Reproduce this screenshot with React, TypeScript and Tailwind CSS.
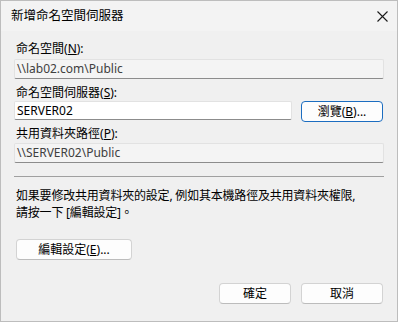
import React from "react";

const font = {
  fontFamily: '"Noto Sans", "Noto Sans CJK TC", sans-serif',
};

const Key = ({ k }: { k: string }) => (
  <>
    (<span className="underline">{k}</span>)
  </>
);

const ReadBox = ({ value }: { value: string }) => (
  <div className="h-[20px] w-full border border-[#e2e2e2] border-b-[#8c8c8c] bg-[#f4f4f4] px-[2px] flex items-center text-[#404040] rounded-[2px]">
    {value}
  </div>
);

const Button = ({
  children,
  className = "",
  focus = false,
}: {
  children: React.ReactNode;
  className?: string;
  focus?: boolean;
}) => (
  <button
    className={
      "h-[21px] flex items-center justify-center rounded-[4px] bg-[#fdfdfd] text-black " +
      (focus
        ? "border border-[#1c6dc0] "
        : "border border-[#d3d3d3] border-b-[#bcbcbc] ") +
      className
    }
  >
    {children}
  </button>
);

export default function App() {
  return (
    <div
      className="w-[398px] h-[322px] bg-[#f0f0f0] border border-[#bdbdbd] flex flex-col text-[12px] leading-[16px] text-black"
      style={font}
    >
      <div className="h-[30px] shrink-0 bg-[#f3f3f3] flex items-center justify-between pl-[10px] pr-[9px]">
        <span className="text-[12.5px]">新增命名空間伺服器</span>
        <svg width="11" height="11" viewBox="0 0 11 11">
          <path d="M0.5 0.5 L10.5 10.5 M10.5 0.5 L0.5 10.5" stroke="#1a1a1a" strokeWidth="1.1" />
        </svg>
      </div>
      <div className="flex flex-col px-[13px] pt-[10px]">
        <div className="pl-[2px]">
          命名空間<Key k="N" />:
        </div>
        <div className="mt-[2px]">
          <ReadBox value={"\\\\lab02.com\\Public"} />
        </div>
        <div className="pl-[2px] mt-[6px]">
          命名空間伺服器<Key k="S" />:
        </div>
        <div className="flex gap-[9px] items-start">
          <div className="h-[19px] w-[278px] border border-[#e2e2e2] border-b-[#8c8c8c] bg-white px-[2px] flex items-center rounded-[2px]">
            SERVER02
          </div>
          <Button focus className="w-[82px] h-[20px]">
            瀏覽<Key k="B" />...
          </Button>
        </div>
        <div className="pl-[2px] mt-[4px]">
          共用資料夾路徑<Key k="P" />:
        </div>
        <div className="mt-[1px]">
          <ReadBox value={"\\\\SERVER02\\Public"} />
        </div>
        <div className="mt-[13px] h-px bg-[#a0a0a0]" />
        <p className="pl-[2px] mt-[10px] leading-[17px] tracking-[-0.2px]">
          如果要修改共用資料夾的設定, 例如其本機路徑及共用資料夾權限,
          <br />
          請按一下 [編輯設定]。
        </p>
        <div className="mt-[18px] pl-[2px]">
          <Button className="w-[116px]">
            編輯設定<Key k="E" />...
          </Button>
        </div>
        <div className="mt-[23px] flex justify-end gap-[10px] pr-[1px]">
          <Button className="w-[72px] h-[20px]">確定</Button>
          <Button className="w-[82px] h-[20px]">取消</Button>
        </div>
      </div>
    </div>
  );
}
